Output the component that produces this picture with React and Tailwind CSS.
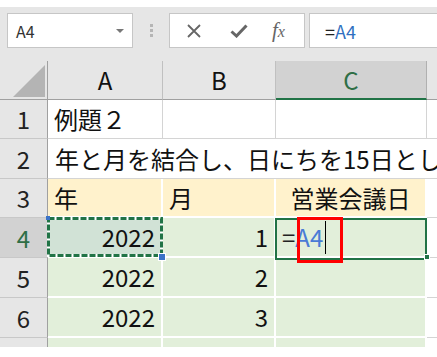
import { useState } from "react";

// column widths (incl. right border): row header, A, B, C, rest
const COLS = ["w-[48px]", "w-[115px]", "w-[113px]", "w-[151px]", "flex-1"];

const ROWS = [
  { n: 1, h: "h-[39px]", fill: null, cells: ["例題２", "", ""] },
  { n: 3, h: "h-[39px]", fill: "bg-[#fff2cc]", cells: ["年", "月", "営業会議日"] },
  { n: 4, h: "h-[40px]", fill: "bg-[#e2efda]", cells: ["2022", "1", ""] },
  { n: 5, h: "h-[40px]", fill: "bg-[#e2efda]", cells: ["2022", "2", ""] },
  { n: 6, h: "h-[40px]", fill: "bg-[#e2efda]", cells: ["2022", "3", ""] },
];

const RowHeader = ({ n, active }) => (
  <div
    className={`${COLS[0]} flex shrink-0 items-center justify-center border-r border-b border-r-[#a0a0a0] border-b-[#c8c8c8] ${
      active ? "bg-[#d2d2d2] text-[#2f6f46]" : "bg-[#e6e6e6] text-[#222]"
    }`}
  >
    {n}
  </div>
);

// copy marquee round A4
const Marquee = () => (
  <svg className="pointer-events-none absolute top-[-1px] left-[-1px] z-10 h-[40px] w-[116px]">
    <rect x="1.5" y="1.5" width="113" height="37" fill="none" stroke="#ffffff" strokeWidth="3" />
    <rect
      x="1.5"
      y="1.5"
      width="113"
      height="37"
      fill="none"
      stroke="#217346"
      strokeWidth="3"
      strokeDasharray="6 2"
    />
  </svg>
);

const DataRow = ({ row }) => {
  const isActive = row.n === 4;
  const border = row.fill
    ? "border-r-2 border-b-2 border-white"
    : "border-r border-b border-[#d4d4d4]";
  return (
    <div className={`flex ${row.h}`}>
      <RowHeader n={row.n} active={isActive} />
      {row.cells.map((txt, i) => {
        const col = i + 1;
        const numeric = row.n >= 4;
        const align =
          row.n === 3 && col === 3
            ? "justify-center"
            : numeric
            ? "justify-end pr-[6px]"
            : "justify-start pl-[6px]";
        const bg = isActive && col === 1 ? "bg-[#d1e2d6]" : row.fill || "bg-white";
        return (
          <div
            key={col}
            className={`${COLS[col]} relative flex shrink-0 items-center ${align} ${bg} ${border}`}
          >
            {txt}
            {isActive && col === 1 && (
              <>
                <Marquee />
                <span className="absolute top-[-2px] left-[-2px] z-20 h-[4px] w-[4px] bg-[#3b73c7]" />
                <span className="absolute right-[-5px] bottom-[-5px] z-20 h-[8px] w-[8px] border border-white bg-[#3b73c7]" />
              </>
            )}
            {isActive && col === 3 && (
              <>
                <div className="absolute left-[6px] flex items-center">
                  <span className="text-[#222]">=</span>
                  <span className="text-[#4a7bd6]">A4</span>
                  <span className="ml-[2px] h-[33px] w-px bg-black" />
                </div>
                <div className="pointer-events-none absolute top-[0px] left-[-1px] z-10 h-[42px] w-[152px] border-2 border-[#217346]" />
                <span className="absolute right-[-5px] bottom-[-4px] z-20 h-[6px] w-[6px] border border-white bg-[#217346]" />
                <div className="pointer-events-none absolute top-[-1px] left-[21px] z-20 h-[46px] w-[46px] border-[3px] border-[#ff0000]" />
              </>
            )}
          </div>
        );
      })}
      <div className={`${COLS[4]} border-b border-[#d4d4d4] bg-white`} />
    </div>
  );
};

export default function App() {
  const [name] = useState("A4");

  return (
    <div className="h-[357px] w-[437px] overflow-hidden bg-white font-['Noto_Sans_CJK_JP','Noto_Sans',sans-serif] text-[24px] leading-none text-[#111]">
      {/* formula bar */}
      <div className="mt-[7px] flex h-[54px] items-start bg-[#e6e6e6] pt-[6px] pl-[7px]">
        <div className="flex h-[35px] w-[126px] items-center justify-between border border-[#c6c6c6] bg-white pr-[8px] pl-[8px] text-[16px] text-[#333]">
          <span>{name}</span>
          <svg width="8" height="4" viewBox="0 0 8 4">
            <path d="M0 0h8L4 4z" fill="#777" />
          </svg>
        </div>
        <div className="ml-[17px] flex h-[35px] flex-col justify-center gap-[2px]">
          <span className="h-[3px] w-[3px] bg-[#b5b5b5]" />
          <span className="h-[3px] w-[3px] bg-[#b5b5b5]" />
          <span className="h-[3px] w-[3px] bg-[#b5b5b5]" />
        </div>
        <div className="ml-[16px] flex h-[35px] w-[136px] items-center border border-[#c6c6c6] bg-white">
          <svg className="ml-[17px]" width="14" height="14" viewBox="0 0 14 14">
            <path d="M1 1L13 13M13 1L1 13" stroke="#666" strokeWidth="1.8" />
          </svg>
          <svg className="ml-[29px]" width="18" height="14" viewBox="0 0 18 14">
            <path d="M1.5 7.5L6.5 12L16.5 1.5" stroke="#666" strokeWidth="3" fill="none" />
          </svg>
          <span className="ml-[24px] font-['Liberation_Serif',serif] text-[21px] text-[#666] italic">
            f<span className="text-[16px]">x</span>
          </span>
        </div>
        <div className="ml-[4px] flex h-[35px] flex-1 items-center border border-r-0 border-[#c6c6c6] bg-white pl-[15px] text-[18px] text-[#222]">
          =<span className="text-[#2f6fc0]">A4</span>
        </div>
      </div>

      {/* column headers */}
      <div className="flex h-[39px] bg-[#e6e6e6]">
        <div className={`${COLS[0]} relative shrink-0 border-r border-b border-[#a0a0a0]`}>
          <svg className="absolute top-[4px] left-[13px]" width="32" height="32" viewBox="0 0 32 32">
            <path d="M32 0V32H0z" fill="#b4b4b4" />
          </svg>
        </div>
        {["A", "B"].map((c, i) => (
          <div
            key={c}
            className={`${COLS[i + 1]} flex shrink-0 items-center justify-center border-r border-b border-r-[#c0c0c0] border-b-[#a0a0a0]`}
          >
            {c}
          </div>
        ))}
        <div className={`${COLS[3]} flex shrink-0 items-center justify-center border-r border-b-2 border-r-[#b0b0b0] border-b-[#217346] bg-[#d2d2d2] text-[#2f6f46]`}>
          C
        </div>
        <div className={`${COLS[4]} border-b border-[#a0a0a0]`} />
      </div>

      <DataRow row={ROWS[0]} />

      {/* row 2: text spills across columns */}
      <div className="flex h-[40px]">
        <RowHeader n={2} />
        <div className="flex flex-1 items-center overflow-hidden border-b border-[#d4d4d4] bg-white pl-[7px] whitespace-nowrap">
          年と月を結合し、日にちを15日とします。
        </div>
      </div>

      {ROWS.slice(1).map((row) => (
        <DataRow key={row.n} row={row} />
      ))}

      {/* row 7, cut off */}
      <div className="flex h-[9px]">
        <div className={`${COLS[0]} shrink-0 border-r border-[#a0a0a0] bg-[#e6e6e6]`} />
        <div className={`${COLS[1]} shrink-0 border-r-2 border-white bg-[#e2efda]`} />
        <div className={`${COLS[2]} shrink-0 border-r-2 border-white bg-[#e2efda]`} />
        <div className={`${COLS[3]} shrink-0 border-r-2 border-white bg-[#e2efda]`} />
        <div className={COLS[4]} />
      </div>
    </div>
  );
}
